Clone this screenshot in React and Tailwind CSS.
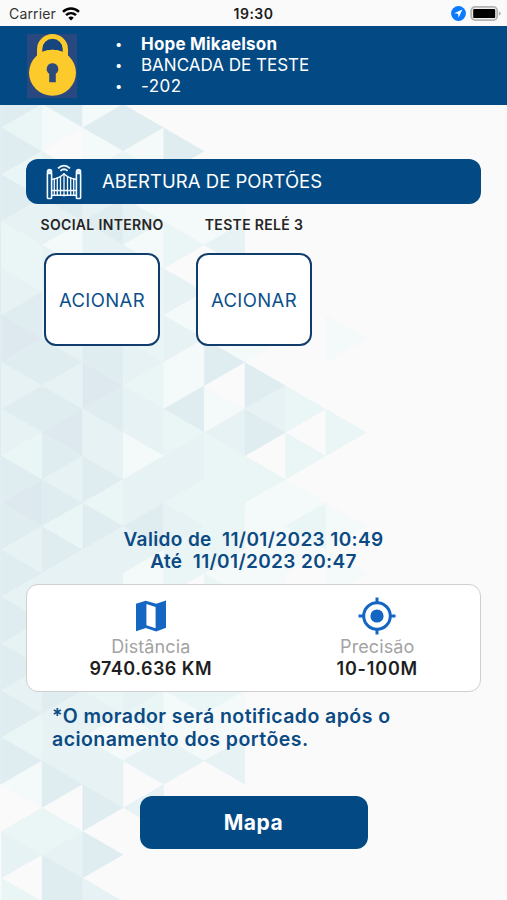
const SHADES = [null, "#f4f9f9", "#e9f6f5", "#e7f2f4", "#dfedf1", "#dde8ef"];

/* One string per vertical strip, one digit per half-step triangle. */
const STRIPS = [
  "424243223454343245434343434241023022",
  "410343132334345434243333343334023442",
  "141234333344543342433333423133404030",
  "041213132323233133431133332130300000",
  "004011203131142332322021321130000000",
  "000011301114013222221221321130000000",
  "000000000010434021111110000000000000",
  "000000000000020201210000200000000000",
  "000000000010002000101000000000000000",
];

const COL = 40.55;
const HALF = 23.45;

function Backdrop() {
  const shapes = [];
  STRIPS.forEach((strip, c) => {
    [...strip].forEach((digit, j) => {
      const fill = SHADES[Number(digit)];
      if (!fill) return;
      const left = 1.5 + c * COL;
      const right = left + COL;
      const y = j * HALF;
      const pointsLeft = (c + j) % 2 === 1;
      const apex = pointsLeft ? left : right;
      const base = pointsLeft ? right : left;
      shapes.push(
        <polygon
          key={`${c}-${j}`}
          points={`${apex},${y} ${base},${y - HALF} ${base},${y + HALF}`}
          fill={fill}
          stroke={fill}
          strokeWidth="0.3"
        />
      );
    });
  });
  return (
    <svg className="absolute inset-0 h-full w-full" viewBox="0 0 507 900">
      <rect x="0" y="104" width="1.5" height="680" fill="#dcedf4" />
      <g transform="translate(0 104.25)">{shapes}</g>
    </svg>
  );
}

function StatusBar() {
  return (
    <div className="grid h-[25.5px] shrink-0 grid-cols-3 items-center bg-[#fafafa] px-[9px] pt-[2px] text-[#1c1c1c]">
      <div className="flex items-center gap-[6px]">
        <span className="text-[14px] tracking-[0.15px] text-[#333]">Carrier</span>
        <svg className="h-[14px] w-[18px]" viewBox="0 0 18 14" fill="none" stroke="#000" strokeWidth="2.5">
          <path d="M1 4.9C5.6.5 12.4.5 17 4.9" />
          <path d="M4 8.2c2.900-2.700 7.100-2.700 10 0" />
          <path d="M9 13.400 6.300 10.700c1.500-1.500 3.900-1.500 5.400 0z" fill="#000" stroke="none" />
        </svg>
      </div>
      <span className="text-center text-[14px] font-semibold tracking-[0.5px]">19:30</span>
      <div className="-mr-[3px] flex items-center justify-end gap-[4px]">
        <svg className="h-[15px] w-[15px]" viewBox="0 0 15 15">
          <circle cx="7.5" cy="7.5" r="7.4" fill="#0a7aff" />
          <path d="M11.400 3.600 3.200 7.300l3.900.5.5 4z" fill="#fff" />
        </svg>
        <svg className="h-[15px] w-[31px]" viewBox="0 0 31 15">
          <rect x="1.2" y="0.9" width="26" height="13.2" rx="3.8" fill="#efefef" stroke="#b4b4b4" strokeWidth="1.8" />
          <rect x="3.2" y="2.9" width="22" height="9.2" rx="1.2" fill="#000" />
          <path d="M28.800 5.200q2 .8 2 2.300t-2 2.300z" fill="#b4b4b4" />
        </svg>
      </div>
    </div>
  );
}

function Padlock() {
  return (
    <svg className="h-[64px] w-[50px]" viewBox="0 0 50 64">
      <rect width="50" height="64" fill="#28487f" />
      <path d="M10 22v-6.500a15.500 15.500 0 0 1 31 0V22z" fill="#fdca2b" />
      <path d="M15.300 18v-3a10.200 10.200 0 0 1 20.400 0v3C29 15 22 15 15.300 18z" fill="#17467f" />
      <ellipse cx="25.500" cy="38.700" rx="23.500" ry="23" fill="#fdca2b" />
      <path d="M25.500 29.300a5.700 5.700 0 0 1 3.300 10.400v8.600h-6.600v-8.600a5.700 5.700 0 0 1 3.300-10.400z" fill="#2c4a7c" />
    </svg>
  );
}

function GateIcon() {
  return (
    <svg className="h-[36px] w-[36px]" viewBox="0 0 36 36" fill="none" stroke="#f2f8fd" strokeWidth="1.3">
      <path d="M12 4.300c3.600-3.700 8.400-3.700 12 0M14.400 6.900c2.200-2 5-2 7.200 0" strokeWidth="1.700" />
      <rect x="1.400" y="8.500" width="4.200" height="26" rx="0.800" strokeWidth="1.600" />
      <rect x="30.400" y="8.500" width="4.200" height="26" rx="0.800" strokeWidth="1.600" />
      <circle cx="3.500" cy="7.500" r="2.200" fill="#dcecf8" />
      <circle cx="32.500" cy="7.500" r="2.200" fill="#dcecf8" />
      <path d="M5.500 15.500Q12 14.800 18 10q6 4.800 12.500 5.500M5.500 26.500h25M5.500 31.300h25" strokeWidth="1.500" />
      <path d="M8.300 14v18M11.300 13v19M14.500 12v20M18 9v23.500M21.500 12v20M24.700 13v19M27.700 14v18" />
    </svg>
  );
}

function Relay({ label }) {
  return (
    <div className="flex w-[116px] flex-col items-center">
      <span className="text-[14px] leading-[20px] font-semibold tracking-[0.33px] whitespace-nowrap text-[#252525]">
        {label}
      </span>
      <button className="mt-[18px] h-[93px] w-[116px] rounded-[12px] border-2 border-[#103d6c] bg-white pt-[2px] text-[18.5px] tracking-[0.4px] text-[#0b4f8c]">
        ACIONAR
      </button>
    </div>
  );
}

function Metric({ icon, label, value, valueClass }) {
  return (
    <div className="flex flex-1 flex-col items-center pt-[11px] pl-[21px]">
      <div className="flex h-[40px] items-center justify-center">{icon}</div>
      <span className="text-[18px] leading-[22px] tracking-[0.1px] text-[#a3a3a3]">{label}</span>
      <span className={`text-[18px] leading-[22px] font-semibold text-[#1e1e1e] ${valueClass}`}>{value}</span>
    </div>
  );
}

export default function App() {
  return (
    <div className="relative h-[900px] w-[507px] overflow-hidden bg-[#fafafa] font-['Inter','Liberation_Sans',sans-serif]">
      <Backdrop />
      <div className="relative flex h-full flex-col">
        <StatusBar />
        <header className="flex h-[79px] shrink-0 items-start bg-[#034a84] pt-[8px] pl-[27px] text-white">
          <Padlock />
          <ul className="ml-[38px] text-[17px] leading-[21px]">
            <li className="flex items-center">
              <span className="w-[26px] text-[13px]">•</span>
              <span className="font-bold tracking-[0.2px]">Hope Mikaelson</span>
            </li>
            <li className="flex items-center">
              <span className="w-[26px] text-[13px]">•</span>
              <span>BANCADA DE TESTE</span>
            </li>
            <li className="flex items-center">
              <span className="w-[26px] text-[13px]">•</span>
              <span className="tracking-[0.5px]">-202</span>
            </li>
          </ul>
        </header>

        <main className="flex flex-1 flex-col px-[26px] pt-[54.5px]">
          <div className="flex h-[45px] shrink-0 items-center rounded-[12px] bg-[#034a84] pl-[20px] text-white">
            <GateIcon />
            <span className="ml-[20px] pt-px text-[18.5px] tracking-[0.03px]">ABERTURA DE PORTÕES</span>
          </div>
          <div className="mt-[11px] flex gap-[36px] pl-[18px]">
            <Relay label="SOCIAL INTERNO" />
            <Relay label="TESTE RELÉ 3" />
          </div>

          <div className="mt-[183px] text-center text-[19px] leading-[22px] font-semibold tracking-[0.37px] whitespace-pre text-[#0b4a83]">
            <p>{"Valido de  11/01/2023 10:49"}</p>
            <p>{"Até  11/01/2023 20:47"}</p>
          </div>

          <section className="mt-[11px] flex h-[108px] shrink-0 rounded-[12px] border border-[#cfcfcf] bg-white">
            <Metric
              label="Distância"
              value="9740.636 KM"
              valueClass="tracking-[0.48px]"
              icon={
                <svg className="h-[32px] w-[32px]" viewBox="0 0 32 32">
                  <path
                    fillRule="evenodd"
                    d="M1 3.800 10.800.8l10.400 3L31 .6v27.200l-9.800 3.600-10.400-3.500L1 31.300zM11.400 4v21.200l9.200 3V7z"
                    fill="#1565c3"
                  />
                </svg>
              }
            />
            <Metric
              label="Precisão"
              value="10-100M"
              valueClass="tracking-[0.8px]"
              icon={
                <svg className="h-[38px] w-[38px]" viewBox="0 0 38 38" fill="none" stroke="#1565c3" strokeWidth="3">
                  <circle cx="19" cy="19" r="13.300" />
                  <circle cx="19" cy="19" r="6.600" fill="#1565c3" stroke="none" />
                  <path d="M19 .5v6M19 31.500v6M.5 19h6M31.500 19h6" />
                </svg>
              }
            />
          </section>

          <p className="mt-[13px] pl-[26px] text-[19.5px] leading-[23px] font-semibold tracking-[0.44px] text-[#0b4a83]">
            *O morador será notificado após o
            <br />
            acionamento dos portões.
          </p>

          <button className="mt-[45px] h-[53px] w-[228px] shrink-0 self-center rounded-[12px] bg-[#034a84] pt-px text-[21px] font-bold tracking-[0.5px] text-white">
            Mapa
          </button>
        </main>
      </div>
    </div>
  );
}
